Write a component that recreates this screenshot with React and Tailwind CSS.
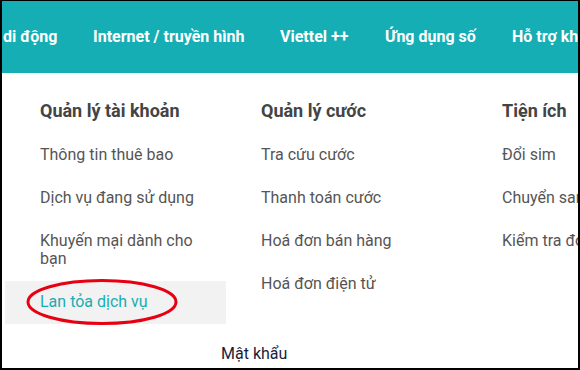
import React from "react";

const font = { fontFamily: "Roboto, 'Noto Sans', sans-serif" };

function Item({ children, active, extra }) {
  return (
    <div
      className={
        "relative pl-[35px] pr-[14px] py-[12.5px] text-[16px] leading-[18px] " +
        (active ? "bg-[#f2f2f2] text-[#17adb3]" : "text-[#555555]")
      }
    >
      {extra}
      <span className="relative">{children}</span>
    </div>
  );
}

export default function App() {
  return (
    <div
      style={font}
      className="w-[580px] h-[370px] overflow-hidden bg-white border-t border-l-2 border-r-2 border-b-2 border-black flex flex-col"
    >
      <div className="h-[72px] bg-[#14aeb4] flex items-center pl-[1px] whitespace-nowrap shrink-0 text-white font-bold text-[16px] leading-none">
        <span className="w-[90px] shrink-0">di động</span>
        <span className="w-[187px] shrink-0">Internet / truyền hình</span>
        <span className="w-[105px] shrink-0">Viettel ++</span>
        <span className="w-[127px] shrink-0">Ứng dụng số</span>
        <span className="shrink-0">Hỗ trợ khách hàng</span>
      </div>
      <div className="relative flex-1">
        <div className="flex pt-[27px] pl-[3px]">
          <div className="w-[221px] shrink-0">
            <div className="pl-[35px] text-[18px] leading-[22px] font-bold text-[#444444] mb-[11.5px]">Quản lý tài khoản</div>
            <Item>Thông tin thuê bao</Item>
            <Item>Dịch vụ đang sử dụng</Item>
            <Item>Khuyến mại dành cho bạn</Item>
            <Item
              active
              extra={
                <svg className="absolute left-[20px] top-[-3px]" width="154" height="48" viewBox="0 0 154 48">
                  <ellipse cx="77" cy="24" rx="74" ry="21.5" fill="none" stroke="#e60012" strokeWidth="3" />
                </svg>
              }
            >
              Lan tỏa dịch vụ
            </Item>
          </div>
          <div className="w-[241px] shrink-0">
            <div className="pl-[35px] text-[18px] leading-[22px] font-bold text-[#444444] mb-[11.5px]">Quản lý cước</div>
            <Item>Tra cứu cước</Item>
            <Item>Thanh toán cước</Item>
            <Item>Hoá đơn bán hàng</Item>
            <Item>Hoá đơn điện tử</Item>
          </div>
          <div className="w-[200px] shrink-0 whitespace-nowrap">
            <div className="pl-[35px] text-[18px] leading-[22px] font-bold text-[#444444] mb-[11.5px]">Tiện ích</div>
            <Item>Đổi sim</Item>
            <Item>Chuyển sang trả sau</Item>
            <Item>Kiểm tra đơn hàng</Item>
          </div>
        </div>
        <div className="pl-[219px] pt-[21px] text-[16px] leading-[18px] text-[#1b1b3a]">Mật khẩu</div>
      </div>
    </div>
  );
}
